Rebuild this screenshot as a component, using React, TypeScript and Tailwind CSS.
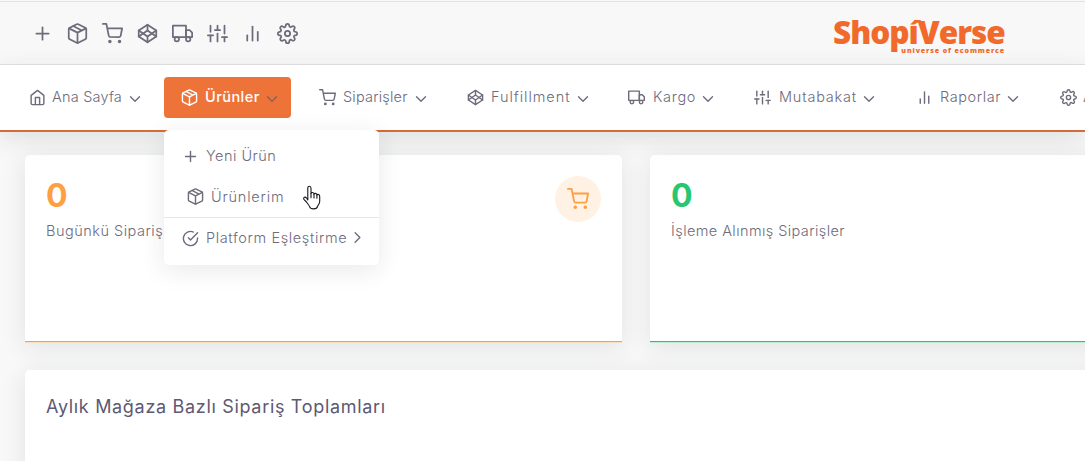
import type { ComponentType } from "react";
import {
  FiBarChart2, FiCheckCircle, FiChevronDown, FiChevronRight, FiCodepen, FiHome,
  FiPlus, FiSettings, FiShoppingCart, FiSliders, FiTruck,
} from "react-icons/fi";

type IconProps = { className?: string };

function PackageIcon({ className }: IconProps) {
  return (
    <svg className={className} viewBox="0 0 24 24" width="1em" height="1em" fill="none" stroke="currentColor" strokeWidth="2" strokeLinecap="round" strokeLinejoin="round">
      <path d="M12.89 1.45l8 4A2 2 0 0 1 22 7.24v9.53a2 2 0 0 1-1.11 1.79l-8 4a2 2 0 0 1-1.79 0l-8-4a2 2 0 0 1-1.1-1.8V7.24a2 2 0 0 1 1.11-1.79l8-4a2 2 0 0 1 1.78 0z" />
      <path d="M2.32 6.16L12 11l9.68-4.84M12 22.76V11M7 3.5l10 5" />
    </svg>
  );
}

const shortcuts: ComponentType<IconProps>[] = [
  FiPlus, PackageIcon, FiShoppingCart, FiCodepen, FiTruck, FiSliders, FiBarChart2, FiSettings,
];

type NavItem = { label: string; icon: ComponentType<IconProps>; item: string; text: string };

const before: NavItem[] = [
  { label: "Ana Sayfa", icon: FiHome, item: "w-[135px]", text: "-ml-px w-[76px] tracking-[0.2px]" },
];
const after: NavItem[] = [
  { label: "Siparişler", icon: FiShoppingCart, item: "w-[148px]", text: "w-[71px] tracking-[0.2px]" },
  { label: "Fulfillment", icon: FiCodepen, item: "w-[161px]", text: "w-[85px] tracking-[0.95px]" },
  { label: "Kargo", icon: FiTruck, item: "w-[126px]", text: "ml-px w-[48px] tracking-[0.7px]" },
  { label: "Mutabakat", icon: FiSliders, item: "w-[162px]", text: "ml-px w-[83px] tracking-[0.8px]" },
  { label: "Raporlar", icon: FiBarChart2, item: "w-[144px]", text: "w-[66px] tracking-[0.6px]" },
  { label: "Ayarlar", icon: FiSettings, item: "w-[140px]", text: "-ml-px w-[67px] tracking-[0.3px]" },
];

function Nav({ label, icon: Icon, item, text }: NavItem) {
  return (
    <div className={`flex shrink-0 items-center ${item}`}>
      <Icon className="mr-[7px] size-[17px] shrink-0" />
      <span className={`mb-[2px] shrink-0 whitespace-nowrap ${text}`}>{label}</span>
      <FiChevronDown className="-ml-[2px] mt-[2px] size-[18px] shrink-0 stroke-[1.8]" />
    </div>
  );
}

export default function App() {
  return (
    <div className="flex h-[461px] w-[1085px] flex-col overflow-hidden bg-[#f8f8f8] font-['Inter',sans-serif] text-[14.5px] font-light text-[#6e6b7b]">
      <header className="mt-px flex h-16 shrink-0 border-y border-[#e2e2e2] pl-[32px]">
        <div className="flex h-full items-center gap-[14px] pt-px">
          {shortcuts.map((Icon, i) => <Icon key={i} className="size-[21px]" />)}
        </div>
        <div className="ml-[535px] flex w-[172px] flex-col pt-[11px] font-['Open_Sans',sans-serif] font-extrabold text-[#f26a2b]">
          <div className="text-[31.5px] leading-[38px] tracking-[-1px] whitespace-nowrap">ShopíVerse</div>
          <div className="-mt-[4px] text-right text-[7px] leading-[8px] tracking-[0.9px] whitespace-nowrap">universe of ecommerce</div>
        </div>
      </header>

      <nav className="relative z-10 flex h-[67px] shrink-0 items-center border-b-2 border-[#d46b3c] bg-white pl-[29px] shadow-[0_6px_24px_rgba(34,41,47,0.12)]">
        {before.map((n) => <Nav key={n.label} {...n} />)}
        <div className="relative mr-[28px] w-[127px] shrink-0">
          <div className="flex h-[41px] items-center rounded-[4px] bg-[#ee7339] pl-[17px] font-medium text-white">
            <PackageIcon className="mr-[7px] size-[17px] shrink-0" />
            <span className="mb-px w-[58px] shrink-0 tracking-[0.45px]">Ürünler</span>
            <FiChevronDown className="mt-[2px] size-[18px] shrink-0 stroke-[1.8] text-[#846360]" />
          </div>
          <div className="absolute top-[53px] left-0 w-[215px] rounded-[5px] bg-white pt-[6px] pb-[7px] shadow-[0_5px_25px_rgba(34,41,47,0.1)]">
            <div className="flex h-10 items-center pl-[18px]">
              <FiPlus className="mr-[7px] size-[17px]" />
              <span className="tracking-[0.5px]">Yeni Ürün</span>
            </div>
            <div className="flex h-[42px] items-center border-b border-[#e6e6e9] pl-[23px]">
              <PackageIcon className="mr-[7px] size-[17px]" />
              <span className="tracking-[0.8px]">Ürünlerim</span>
            </div>
            <div className="flex h-10 items-center pl-[18px]">
              <FiCheckCircle className="mr-[7px] size-[17px]" />
              <span className="w-[142px] shrink-0 tracking-[0.63px] whitespace-nowrap">Platform Eşleştirme</span>
              <FiChevronRight className="mb-[2px] size-[19px] shrink-0 stroke-[1.7]" />
            </div>
            <svg className="absolute top-[55px] left-[139px]" width="18" height="26" viewBox="0 0 18 26" fill="white" stroke="#16171c" strokeWidth="1.1" strokeLinejoin="round" strokeLinecap="round">
              <path d="M4.8 15V3.2C4.8.6 8 .6 8 3.2v5.3c.2-1.5 3-1.3 3 .7.3-1.3 2.8-1.2 2.9.7.6-1 2.8-.6 2.8 1.3v5.2c0 2.3-1.8 3.6-2.1 5-.7 3.3-7 3.3-8 .3-.7-2-2.2-3.1-3.1-4.7L.9 14.3c-.9-2 1.3-3 2.6-1.3z" />
              <path d="M8 8.5v4.2M11 9.2v3.8M13.9 10v3.3" />
            </svg>
          </div>
        </div>
        {after.map((n) => <Nav key={n.label} {...n} />)}
      </nav>

      <main className="flex flex-col gap-[27px] pt-[23px] pl-[25px]">
        <div className="flex gap-7">
          <section className="flex h-[188px] w-[597px] shrink-0 flex-col justify-between rounded-t-[5px] bg-white shadow-[0_4px_24px_rgba(34,41,47,0.1)]">
            <div className="flex justify-between px-[21px] pt-[21px]">
              <div>
                <div className="mt-px text-[32px] leading-[37px] font-bold text-[#ff9f43]">0</div>
                <div className="mt-[6px] tracking-[0.5px]">Bugünkü Siparişler</div>
              </div>
              <div className="flex size-[46px] items-center justify-center rounded-full bg-[#fff1e4] text-[#ff9f43]">
                <FiShoppingCart className="size-[22px]" />
              </div>
            </div>
            <div className="h-[2px] border-b border-[#f8dfc2] bg-[#f5a04c]" />
          </section>
          <section className="flex h-[188px] w-[597px] shrink-0 flex-col justify-between rounded-t-[5px] bg-white shadow-[0_4px_24px_rgba(34,41,47,0.1)]">
            <div className="px-[21px] pt-[21px]">
              <div className="mt-px text-[32px] leading-[37px] font-bold text-[#28c76f]">0</div>
              <div className="mt-[6px] tracking-[0.42px]">İşleme Alınmış Siparişler</div>
            </div>
            <div className="h-[2px] border-b border-[#bdeed2] bg-[#28c76f]" />
          </section>
        </div>
        <section className="h-[200px] w-[1222px] rounded-[5px] bg-white px-[21px] pt-[23px] shadow-[0_4px_24px_rgba(34,41,47,0.1)]">
          <h2 className="text-[18px] leading-[28px] font-normal tracking-[0.68px] text-[#5e5873]">Aylık Mağaza Bazlı Sipariş Toplamları</h2>
        </section>
      </main>
    </div>
  );
}
